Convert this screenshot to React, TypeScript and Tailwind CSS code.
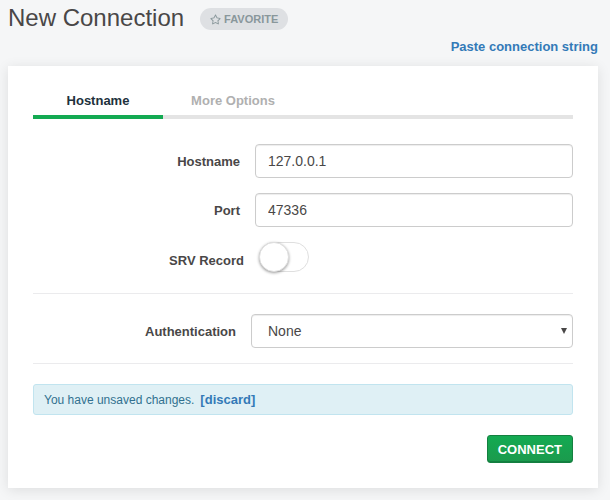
import type { ReactNode } from 'react';
import { FaRegStar } from 'react-icons/fa';

const inputClass =
  'h-[34px] w-full rounded border border-[#cccccc] bg-white px-3 text-sm text-[#494747] shadow-[inset_0_1px_1px_rgba(0,0,0,0.075)] outline-none';

function Field({ id, label, labelClass, children }: { id: string; label: string; labelClass: string; children: ReactNode }) {
  return (
    <div className="flex items-center gap-[15px]">
      <label htmlFor={id} className={`shrink-0 text-right text-[13px] leading-5 font-bold text-[#494747] ${labelClass}`}>
        {label}
      </label>
      {children}
    </div>
  );
}

export default function App() {
  return (
    <div className="min-h-screen bg-[#f5f6f7] pr-3 pb-3 pl-2 font-['Liberation_Sans',Arial,sans-serif] text-[#494747]">
      <header className="flex h-9 items-center gap-4">
        <h1 className="text-2xl whitespace-nowrap">New Connection</h1>
        <button className="mt-[2px] flex h-[22px] items-center gap-[3px] rounded-full bg-[#dee0e3] px-[10px] text-[11px] font-bold text-[#89979b]">
          <FaRegStar size={11} />
          FAVORITE
        </button>
      </header>
      <div className="flex h-[30px] items-start justify-end pt-px">
        <a href="#uri" className="text-[13px] leading-5 font-bold text-[#337ab7]">
          Paste connection string
        </a>
      </div>

      <main className="bg-white px-[25px] pt-[14px] pb-[25px] shadow-[0_2px_12px_rgba(0,0,0,0.1)]">
        <nav className="flex border-b-4 border-[#e4e4e4] text-[13px] leading-5 font-bold">
          <button className="-mb-1 h-[39px] w-[130px] border-b-4 border-[#13aa52] pt-[6px] text-[#21313c]">Hostname</button>
          <button className="-mb-1 h-[39px] w-[140px] border-b-4 border-transparent pt-[6px] text-[#b0b0b0]">More Options</button>
        </nav>

        <form className="pt-[25px]" onSubmit={(e) => e.preventDefault()}>
          <div className="flex flex-col gap-[15px]">
            <Field id="hostname" label="Hostname" labelClass="w-[207px] pt-[2px]">
              <input id="hostname" className={inputClass} defaultValue="127.0.0.1" />
            </Field>
            <Field id="port" label="Port" labelClass="w-[207px] pt-[2px]">
              <input id="port" className={inputClass} defaultValue="47336" />
            </Field>
            <Field id="srv" label="SRV Record" labelClass="w-[211px] pt-2">
              <input
                id="srv"
                type="checkbox"
                role="switch"
                className="h-[30px] w-[50px] shrink-0 appearance-none rounded-full border border-[#dfdfdf] bg-white before:-m-px before:block before:size-[30px] before:rounded-full before:border before:border-[#dfdfdf] before:bg-white before:shadow-[0_1px_3px_rgba(0,0,0,0.4)] checked:bg-[#13aa52] checked:before:translate-x-5"
              />
            </Field>
          </div>

          <hr className="mt-[21px] mb-5 border-[#ebebed]" />
          <Field id="auth" label="Authentication" labelClass="w-[203px] pt-[2px]">
            <div className="relative flex-1">
              <select id="auth" className={`${inputClass} appearance-none px-4`}>
                <option>None</option>
              </select>
              <svg className="pointer-events-none absolute top-[14px] right-[6px]" width="6" height="6" viewBox="0 0 6 6" aria-hidden="true">
                <path d="M0 0h6L3 6z" fill="#494747" />
              </svg>
            </div>
          </Field>
          <hr className="mt-[15px] mb-5 border-[#ebebed]" />

          <div className="flex h-[31px] items-center gap-[6px] rounded-[3px] border border-[#c1e4ef] bg-[#dff0f5] px-[10px] text-xs text-[#31708f]">
            <span>You have unsaved changes.</span>
            <a href="#discard" className="text-[13px] font-bold text-[#337ab7]">
              [discard]
            </a>
          </div>

          <div className="mt-5 flex justify-end">
            <button
              type="submit"
              className="h-7 rounded-[3px] border border-[#148040] bg-linear-to-b from-[#13aa52] to-[#1b9a4d] px-[10px] pt-px text-[13px] font-bold text-white shadow-[inset_0_-1px_0_#148040]"
            >
              CONNECT
            </button>
          </div>
        </form>
      </main>
    </div>
  );
}
